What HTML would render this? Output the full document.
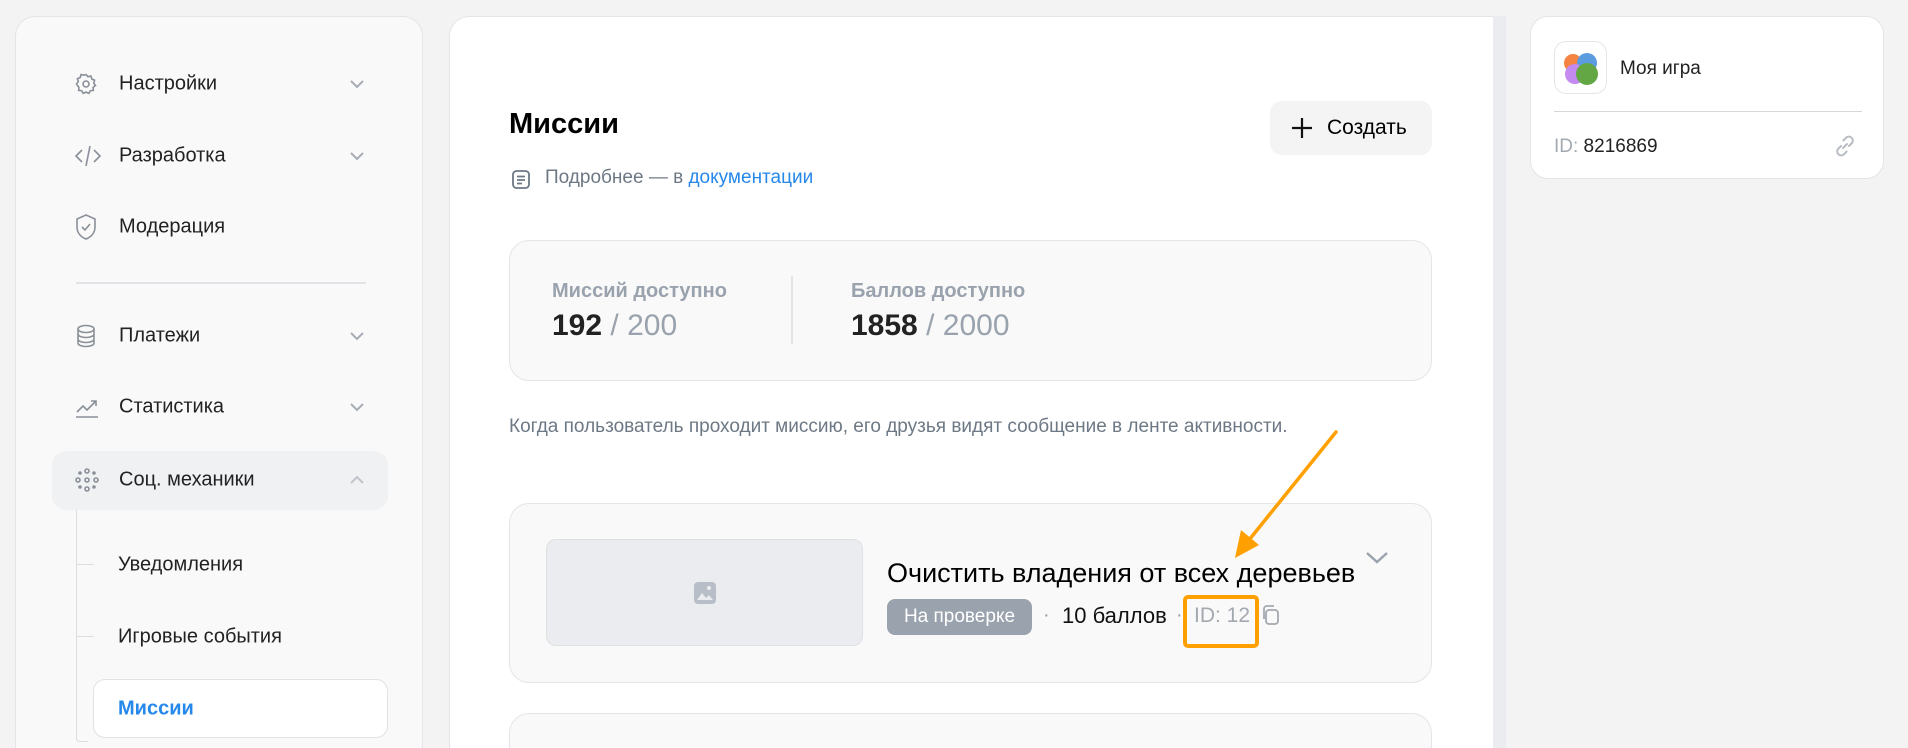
<!DOCTYPE html>
<html style="height:748px;overflow:hidden"><head><meta charset="utf-8"><style>
*{margin:0;padding:0;box-sizing:border-box}
html,body{width:1908px;height:748px;overflow:hidden}
body{background:#f3f3f4;font-family:"Liberation Sans",sans-serif;position:relative;color:#000}
.abs{position:absolute}
.side{left:15px;top:16px;width:408px;height:732px;background:#f9f9f9;border:1px solid #e5e5e8;border-bottom:none;border-radius:20px 20px 0 0}
.item{position:absolute;left:0;width:408px;height:40px;font-size:20px;color:#222}
.item .t{position:absolute;left:103px;top:50%;transform:translateY(-50%)}
.item svg.ic{position:absolute;left:58px;top:50%;transform:translateY(-50%)}
.item svg.ch{position:absolute;left:332px;top:50%;transform:translateY(-50%)}
.sub{position:absolute;left:102px;font-size:20px;color:#222;transform:translateY(-50%)}
.main{left:449px;top:16px;width:1044px;height:732px;background:#fff;border:1px solid #e5e5e8;border-radius:20px 0 0 0;border-right:none;border-bottom:none}
.track{left:1493px;top:16px;width:13px;height:732px;background:#ebecef}
.card{left:1530px;top:16px;width:354px;height:163px;background:#fff;border:1px solid #e5e5e8;border-radius:18px}
#wrap{position:absolute;left:0;top:0;width:1908px;height:748px;overflow:hidden}
</style></head><body><div id="wrap">

<div class="abs side">
  <div class="item" style="top:47px">
    <svg class="ic" width="24" height="24" viewBox="0 0 24 24" fill="none" stroke="#8a9099" stroke-width="1.6"><circle cx="12" cy="12" r="3"/><path d="M12 2.5l2 2.2 3-.6.8 2.9 2.8 1.2-.9 2.9 1.8 2.4-2.4 1.9.2 3-3 .3-1.4 2.6-2.9-1.2-2.9 1.2-1.4-2.6-3-.3.2-3L2.5 12l1.8-2.4-.9-2.9 2.8-1.2.8-2.9 3 .6z"/></svg>
    <span class="t">Настройки</span>
    <svg class="ch" width="18" height="12" viewBox="0 0 18 12" fill="none" stroke="#a7adb5" stroke-width="2"><path d="M3 3l6 6 6-6"/></svg>
  </div>
  <div class="item" style="top:119px">
    <svg class="ic" width="28" height="24" viewBox="0 0 28 24" fill="none" stroke="#8a9099" stroke-width="1.6"><path d="M8 6l-6 6 6 6M20 6l6 6-6 6M16 2l-4 20"/></svg>
    <span class="t">Разработка</span>
    <svg class="ch" width="18" height="12" viewBox="0 0 18 12" fill="none" stroke="#a7adb5" stroke-width="2"><path d="M3 3l6 6 6-6"/></svg>
  </div>
  <div class="item" style="top:190px">
    <svg class="ic" width="24" height="28" viewBox="0 0 24 28" fill="none" stroke="#8a9099" stroke-width="1.6"><path d="M12 2l9 4v8c0 6-4 10-9 12-5-2-9-6-9-12V6z"/><path d="M8 14l3 3 5-6"/></svg>
    <span class="t">Модерация</span>
  </div>
  <div class="abs" style="left:60px;top:265px;width:290px;height:2px;background:#e3e4e8"></div>
  <div class="item" style="top:299px">
    <svg class="ic" width="24" height="26" viewBox="0 0 24 26" fill="none" stroke="#8a9099" stroke-width="1.6"><ellipse cx="12" cy="6" rx="8" ry="3.5"/><path d="M4 6v14c0 2 3.6 3.5 8 3.5s8-1.5 8-3.5V6M4 11c0 2 3.6 3.5 8 3.5s8-1.5 8-3.5M4 16c0 2 3.6 3.5 8 3.5s8-1.5 8-3.5"/></svg>
    <span class="t">Платежи</span>
    <svg class="ch" width="18" height="12" viewBox="0 0 18 12" fill="none" stroke="#a7adb5" stroke-width="2"><path d="M3 3l6 6 6-6"/></svg>
  </div>
  <div class="item" style="top:370px">
    <svg class="ic" width="26" height="24" viewBox="0 0 26 24" fill="none" stroke="#8a9099" stroke-width="1.6"><path d="M2 22h22M3 17l6-6 4 4 9-9M17 6h5v5"/></svg>
    <span class="t">Статистика</span>
    <svg class="ch" width="18" height="12" viewBox="0 0 18 12" fill="none" stroke="#a7adb5" stroke-width="2"><path d="M3 3l6 6 6-6"/></svg>
  </div>
  <div class="abs" style="left:36px;top:434px;width:336px;height:59px;background:#f0f1f3;border-radius:14px"></div>
  <div class="item" style="top:443px">
    <svg class="ic" width="26" height="26" viewBox="0 0 26 26" fill="none" stroke="#8a9099" stroke-width="1.6"><circle cx="13" cy="4" r="2"/><circle cx="13" cy="13" r="2"/><circle cx="13" cy="22" r="2"/><circle cx="4" cy="13" r="2"/><circle cx="22" cy="13" r="2"/><circle cx="6" cy="6" r="1" fill="#8a9099"/><circle cx="20" cy="6" r="1" fill="#8a9099"/><circle cx="6" cy="20" r="1" fill="#8a9099"/><circle cx="20" cy="20" r="1" fill="#8a9099"/></svg>
    <span class="t">Соц. механики</span>
    <svg class="ch" width="18" height="12" viewBox="0 0 18 12" fill="none" stroke="#c0c4ca" stroke-width="2"><path d="M3 9l6-6 6 6"/></svg>
  </div>
  <div class="abs" style="left:60px;top:493px;width:12px;height:232px;border-left:1px solid #dcdde1;border-bottom:1px solid #dcdde1;border-bottom-left-radius:4px"></div>
  <div class="abs" style="left:60px;top:547px;width:18px;height:1px;background:#dcdde1"></div>
  <div class="abs" style="left:60px;top:619px;width:18px;height:1px;background:#dcdde1"></div>
  <span class="sub" style="top:548px">Уведомления</span>
  <span class="sub" style="top:620px">Игровые события</span>
  <div class="abs" style="left:77px;top:662px;width:295px;height:59px;background:#fff;border:1px solid #e1e2e6;border-radius:12px"></div>
  <span class="sub" style="top:692px;color:#2688eb;font-weight:bold">Миссии</span>
</div>

<div class="abs main"></div>
<div class="abs track"></div>

<div class="abs" style="left:509px;top:108px;font-size:29px;font-weight:bold">Миссии</div>
<svg class="abs" style="left:511px;top:169px" width="20" height="21" viewBox="0 0 20 21" fill="none" stroke="#6d7885" stroke-width="1.8"><rect x="2" y="2" width="16" height="17" rx="3.5"/><path d="M6 7.5h8M6 11h8M6 14.5h5"/></svg>
<div class="abs" style="left:545px;top:167px;font-size:19px;color:#6d7885">Подробнее — в <span style="color:#2688eb">документации</span></div>

<div class="abs" style="left:1270px;top:101px;width:162px;height:54px;background:#f4f4f5;border-radius:12px"></div>
<svg class="abs" style="left:1290px;top:116px" width="24" height="24" viewBox="0 0 24 24" stroke="#111" stroke-width="2.2"><path d="M12 2v20M2 12h20"/></svg>
<div class="abs" style="left:1327px;top:116px;font-size:21px">Создать</div>

<div class="abs" style="left:509px;top:240px;width:923px;height:141px;background:#f9f9f9;border:1px solid #e5e5e8;border-radius:20px"></div>
<div class="abs" style="left:552px;top:280px;font-size:20px;font-weight:bold;color:#99a2ad">Миссий доступно</div>
<div class="abs" style="left:552px;top:309px;font-size:30px;color:#222"><b>192</b> <span style="color:#99a2ad">/ 200</span></div>
<div class="abs" style="left:791px;top:276px;width:2px;height:68px;background:#e3e4e8"></div>
<div class="abs" style="left:851px;top:280px;font-size:20px;font-weight:bold;color:#99a2ad">Баллов доступно</div>
<div class="abs" style="left:851px;top:309px;font-size:30px;color:#222"><b>1858</b> <span style="color:#99a2ad">/ 2000</span></div>

<div class="abs" style="left:509px;top:416px;font-size:19px;color:#6d7885">Когда пользователь проходит миссию, его друзья видят сообщение в ленте активности.</div>

<div class="abs" style="left:509px;top:503px;width:923px;height:180px;background:#f9f9f9;border:1px solid #e5e5e8;border-radius:20px"></div>
<div class="abs" style="left:546px;top:539px;width:317px;height:107px;background:#ebecf0;border:1px solid #dfe0e4;border-radius:10px"></div>
<svg class="abs" style="left:693px;top:581px" width="24" height="24" viewBox="0 0 24 24"><rect x="1" y="1" width="22" height="22" rx="4" fill="#b7bec8"/><path d="M4 19l5-7 4 5 3-3 4 5z" fill="#ebecf0"/><circle cx="16" cy="7" r="2" fill="#ebecf0"/></svg>
<div class="abs" style="left:887px;top:558px;font-size:27px;color:#000">Очистить владения от всех деревьев</div>
<div class="abs" style="left:887px;top:599px;width:145px;height:36px;background:#99a2ad;border-radius:8px;color:#fff;font-size:19px;line-height:36px;text-align:center">На проверке</div>
<div class="abs" style="left:1043px;top:604px;font-size:20px;color:#99a2ad">·</div>
<div class="abs" style="left:1062px;top:603px;font-size:22px;color:#111">10 баллов</div>
<div class="abs" style="left:1176px;top:604px;font-size:20px;color:#99a2ad">·</div>
<div class="abs" style="left:1194px;top:604px;font-size:21px;color:#a3a9b1">ID: 12</div>
<div class="abs" style="left:1183px;top:595px;width:76px;height:53px;border:4px solid #ffa000;border-radius:5px"></div>
<svg class="abs" style="left:1261px;top:604px" width="20" height="22" viewBox="0 0 20 22" fill="none" stroke="#a3a9b1" stroke-width="1.8"><rect x="5" y="6" width="12" height="14" rx="3"/><path d="M3 15V5c0-1.7 1.3-3 3-3h7"/></svg>
<svg class="abs" style="left:1364px;top:550px" width="26" height="16" viewBox="0 0 26 16" fill="none" stroke="#99a2ad" stroke-width="2.4"><path d="M3 3l10 9 10-9"/></svg>
<svg class="abs" style="left:1220px;top:425px" width="130" height="140" viewBox="0 0 130 140"><path d="M116 7L25 120" stroke="#ffa000" stroke-width="3.5" stroke-linecap="round"/><path d="M15 133l6-28 18 15z" fill="#ffa000"/></svg>

<div class="abs" style="left:509px;top:713px;width:923px;height:35px;background:#f9f9f9;border:1px solid #e5e5e8;border-bottom:none;border-radius:20px 20px 0 0"></div>

<div class="abs card"></div>
<div class="abs" style="left:1554px;top:41px;width:53px;height:53px;border:1px solid #e5e5e8;border-radius:12px;background:#fff"></div>
<svg class="abs" style="left:1554px;top:41px" width="53" height="53" viewBox="0 0 53 53"><circle cx="19" cy="22" r="9" fill="#f58442"/><circle cx="33" cy="22" r="10" fill="#5b9be0"/><circle cx="21" cy="33" r="10" fill="#c48af0"/><circle cx="33" cy="33" r="11" fill="#63a644"/></svg>
<div class="abs" style="left:1620px;top:58px;font-size:19px;color:#222">Моя игра</div>
<div class="abs" style="left:1554px;top:111px;width:308px;height:1px;background:#d6d7db"></div>
<div class="abs" style="left:1554px;top:136px;font-size:19px;color:#222"><span style="color:#a3a9b1">ID:</span> 8216869</div>
<svg class="abs" style="left:1832px;top:133px" width="26" height="26" viewBox="0 0 26 26" fill="none" stroke="#b7bcc3" stroke-width="2" stroke-linecap="round"><path d="M11 15l4-4M9 13l-3 3a4 4 0 005.6 5.6l3-3M17 13l3-3a4 4 0 00-5.6-5.6l-3 3"/></svg>
</div></body></html>
